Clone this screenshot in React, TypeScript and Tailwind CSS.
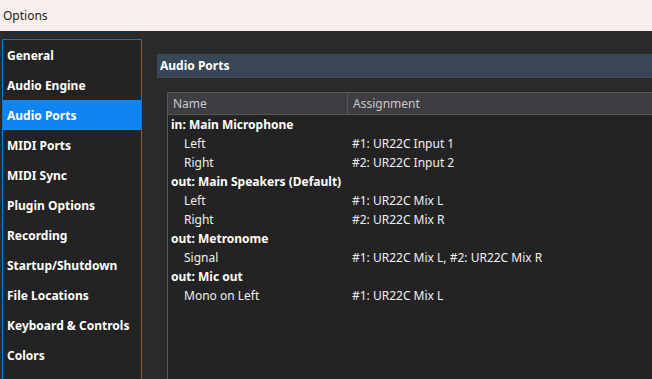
import React from "react";

const nav = [
  "General",
  "Audio Engine",
  "Audio Ports",
  "MIDI Ports",
  "MIDI Sync",
  "Plugin Options",
  "Recording",
  "Startup/Shutdown",
  "File Locations",
  "Keyboard & Controls",
  "Colors",
];

type Row = { name: string; assign?: string; group?: boolean };
const rows: Row[] = [
  { name: "in: Main Microphone", group: true },
  { name: "Left", assign: "#1: UR22C Input 1" },
  { name: "Right", assign: "#2: UR22C Input 2" },
  { name: "out: Main Speakers (Default)", group: true },
  { name: "Left", assign: "#1: UR22C Mix L" },
  { name: "Right", assign: "#2: UR22C Mix R" },
  { name: "out: Metronome", group: true },
  { name: "Signal", assign: "#1: UR22C Mix L, #2: UR22C Mix R" },
  { name: "out: Mic out", group: true },
  { name: "Mono on Left", assign: "#1: UR22C Mix L" },
];

export default function App() {
  return (
    <div
      className="w-[652px] h-[379px] overflow-hidden bg-[#2a2a2a] flex flex-col"
      style={{ fontFamily: '"Noto Sans", "Open Sans", sans-serif' }}
    >
      <div className="h-[31px] shrink-0 bg-[#f8efed] flex items-center pl-[3px] text-[12px] text-[#1b1b1b]">
        Options
      </div>
      <div className="flex flex-1 min-h-0 pt-[8px] pl-[2px]">
        <div className="w-[140px] shrink-0 border border-[#0c74d4] border-b-0 bg-[#232323] flex flex-col">
          {nav.map((n) => (
            <div
              key={n}
              className={`h-[30px] shrink-0 flex items-center pl-[4px] pt-[2px] text-[12px] font-bold text-white ${
                n === "Audio Ports" ? "bg-[#0e85f0]" : ""
              }`}
            >
              {n}
            </div>
          ))}
        </div>
        <div className="flex-1 min-w-0 flex flex-col pl-[15px] pt-[15px]">
          <div className="h-[24px] shrink-0 bg-[#394656] border-b border-[#4d4d4d] flex items-center pl-[3px] text-[12px] font-bold text-white">
            Audio Ports
          </div>
          <div className="flex-1 ml-[10px] mt-[14px] border-l border-t border-[#555555] bg-[#232323] flex flex-col">
            <div className="h-[22px] shrink-0 flex bg-[#3e3e42] border-b border-[#555555] text-[12px] text-[#c8c8c8]">
              <div className="w-[180px] shrink-0 border-r border-[#555555] flex items-center pl-[5px]">
                Name
              </div>
              <div className="flex-1 flex items-center pl-[5px]">Assignment</div>
            </div>
            {rows.map((r, i) => (
              <div
                key={i}
                className="h-[19px] shrink-0 flex items-center text-[12px] text-[#f0f0f0]"
              >
                {r.group ? (
                  <div className="pl-[3px] font-bold text-white whitespace-nowrap">{r.name}</div>
                ) : (
                  <>
                    <div className="w-[180px] shrink-0 pl-[16px] whitespace-nowrap">{r.name}</div>
                    <div className="pl-[4px] whitespace-nowrap">{r.assign}</div>
                  </>
                )}
              </div>
            ))}
          </div>
        </div>
      </div>
    </div>
  );
}
